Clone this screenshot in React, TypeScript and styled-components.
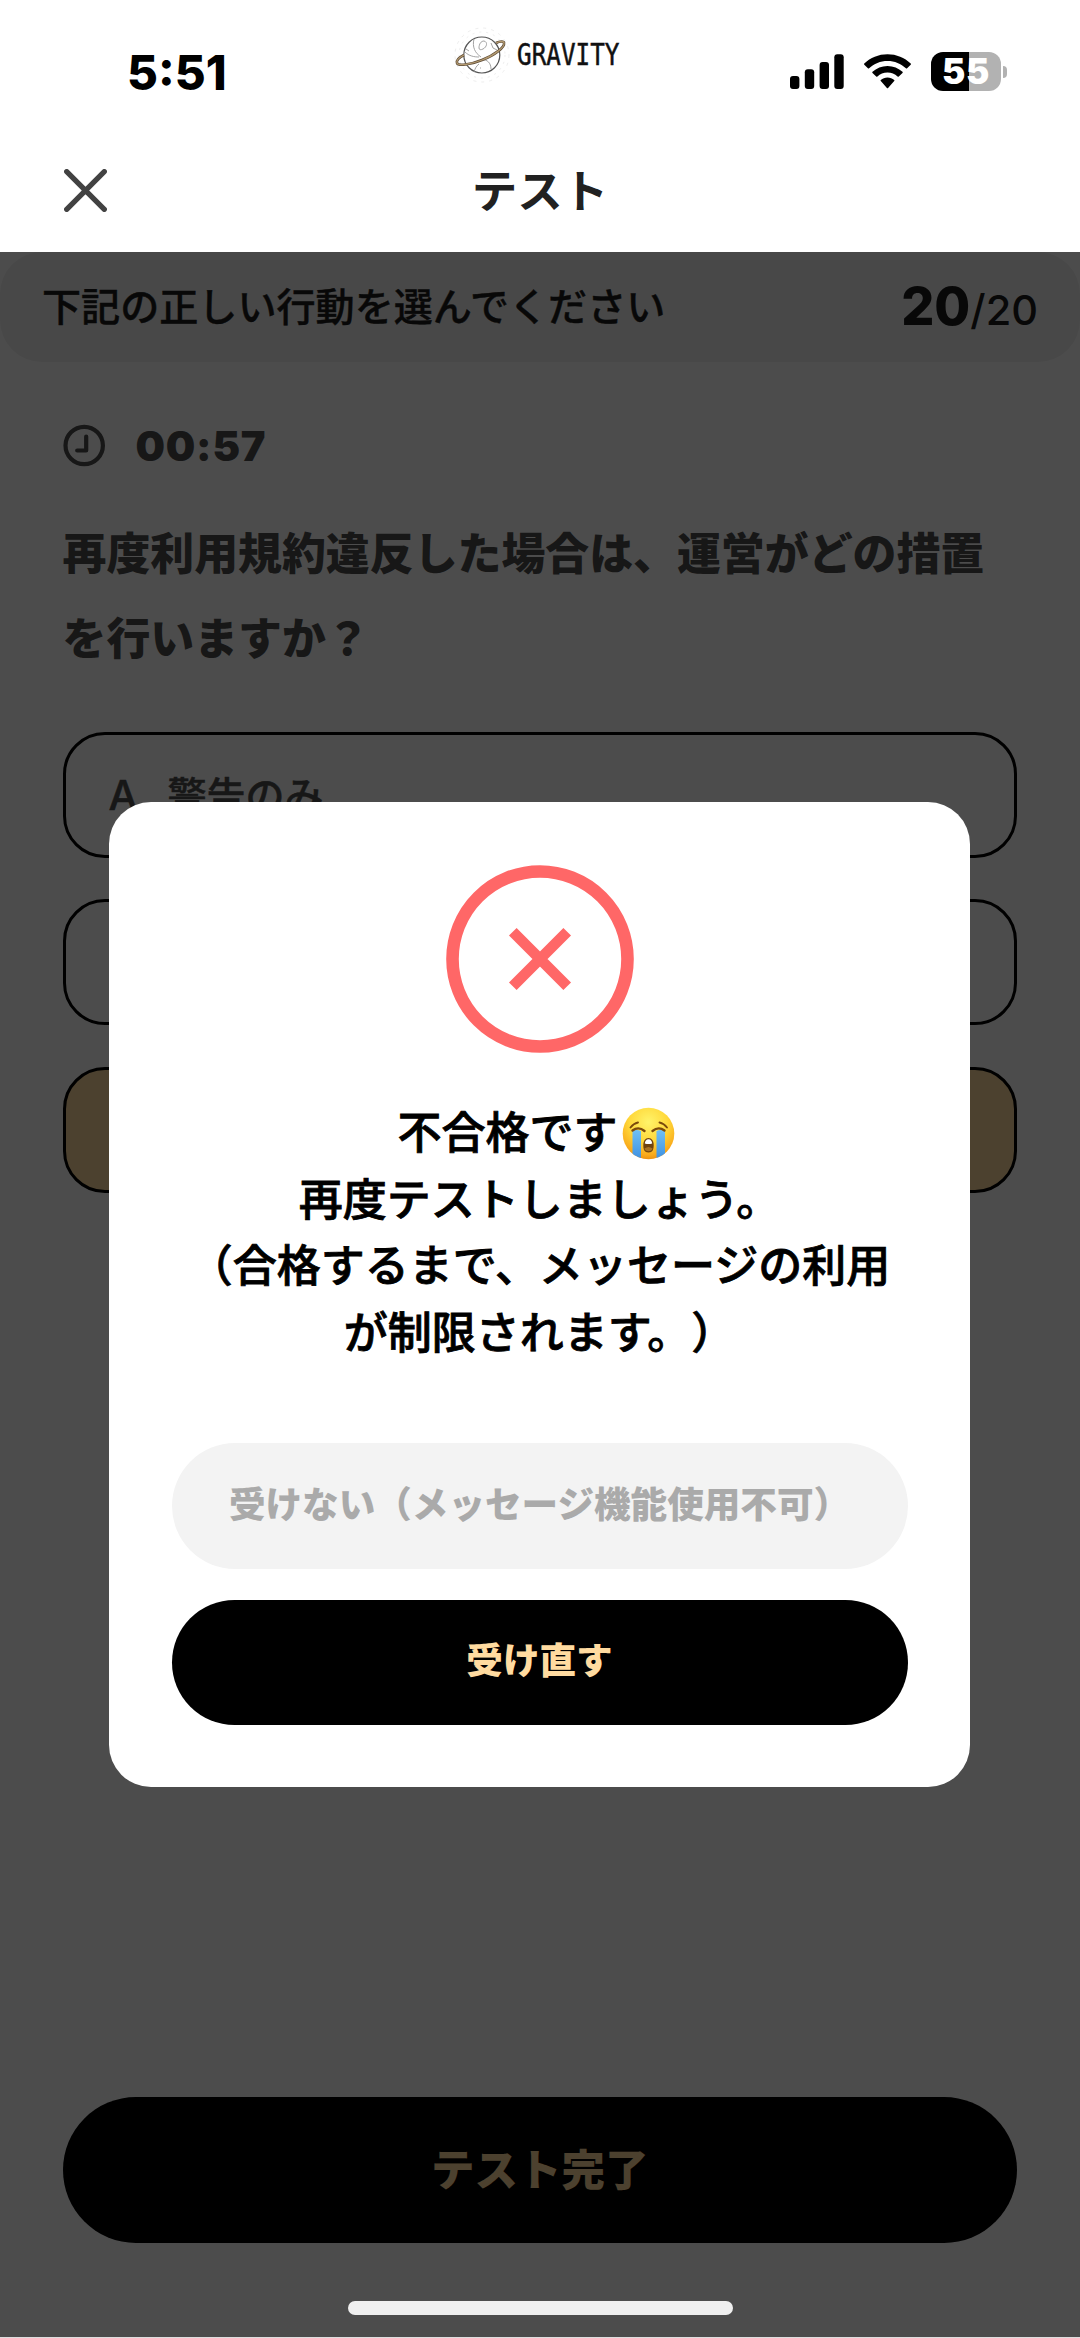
import React from 'react';
import styled, { createGlobalStyle } from 'styled-components';

const GlobalStyle = createGlobalStyle`
  * { box-sizing: border-box; }
  body {
    margin: 0;
    background: #fff;
    font-family: Inter, "Noto Sans CJK JP", sans-serif;
    text-spacing-trim: space-all;
    -webkit-font-smoothing: antialiased;
  }
  button { font-family: inherit; border: 0; padding: 0; margin: 0; }
  p, h1, h2 { margin: 0; }
  svg { display: block; }
`;

const Screen = styled.div`
  width: 1080px;
  height: 2338px;
  display: flex;
  flex-direction: column;
  overflow: hidden;
  background: #fff;
`;

const StatusBar = styled.header`
  display: grid;
  grid-template-columns: 450px 170px 1fr;
  height: 136px;
  flex: none;
`;

const Clock = styled.time`
  padding: 44px 0 0 127px;
  font-size: 47.5px;
  line-height: 58px;
  font-weight: 800;
  letter-spacing: 0;
  color: #000;
`;

const Brand = styled.div`
  display: flex;
  width: 170px;
  height: 60px;
  margin-top: 25px;
  align-items: center;
`;

const BrandName = styled.span`
  width: 102px;
  margin-left: 5px;
  font-family: "DejaVu Sans Mono", monospace;
  font-size: 30px;
  line-height: 60px;
  color: #111;
  white-space: nowrap;
  -webkit-text-stroke: 0.5px #111;
  transform: scaleX(0.81);
  transform-origin: left center;
`;

const StatusIcons = styled.div`
  display: flex;
  justify-content: flex-end;
  padding: 52px 73px 0 0;
`;

const Signal = styled.svg`
  margin: 2px 20px 0 0;
`;

const Wifi = styled.svg`
  margin: 2px 20px 0 0;
`;

const Battery = styled.div`
  display: flex;
  align-items: center;
  height: 39px;
  gap: 2px;
`;

const BatteryBody = styled.div<{ $level: number }>`
  width: 70px;
  height: 39px;
  border-radius: 12px;
  background: linear-gradient(
    to right,
    #000 ${(p) => p.$level}%,
    #b2b2b2 ${(p) => p.$level}%
  );
  color: #fff;
  font-size: 35px;
  line-height: 39px;
  font-weight: 900;
  letter-spacing: 0.6px;
  text-align: center;
`;

const BatteryTip = styled.span`
  width: 4px;
  height: 12px;
  border-radius: 0 6px 6px 0;
  background: #b2b2b2;
`;

const NavBar = styled.nav`
  display: grid;
  grid-template-columns: 1fr auto 1fr;
  align-items: center;
  height: 116px;
  padding: 0 64px 7px;
  flex: none;
`;

const CloseButton = styled.button`
  width: 43px;
  height: 43px;
  background: none;
`;

const Title = styled.h1`
  padding-top: 2px;
  font-size: 45.5px;
  line-height: 60px;
  font-weight: 700;
  color: #212121;
`;

const Body = styled.main`
  position: relative;
  display: flex;
  flex-direction: column;
  flex: 1;
`;

const Banner = styled.section`
  display: flex;
  align-items: center;
  justify-content: space-between;
  height: 110px;
  padding: 0 42px 0 42px;
  border-radius: 42px;
  background: #f1f1f1;
  color: #1b1b1b;
  font-size: 39.1px;
  line-height: 56px;
  font-weight: 500;
`;

const BannerText = styled.span`
  padding-bottom: 1px;
  -webkit-text-stroke: 0.4px #1b1b1b;
`;

const Counter = styled.div`
  display: flex;
  align-items: baseline;
  padding-top: 3px;
  font-size: 41.5px;
  line-height: 60px;
  font-weight: 450;
`;

const Current = styled.strong`
  font-size: 52px;
  font-weight: 850;
`;

const Quiz = styled.section`
  display: flex;
  flex-direction: column;
  padding: 62px 63px 0 62.5px;
`;

const Timer = styled.div`
  display: flex;
  align-items: center;
  gap: 29px;
  height: 44px;
  color: #4d4d4d;
  font-size: 41.5px;
  font-weight: 900;
  letter-spacing: 0.8px;
`;

const Question = styled.h2`
  margin-top: 43.5px;
  color: #4d4d4d;
  font-size: 43.9px;
  line-height: 85.5px;
  font-weight: 900;
`;

const Options = styled.div`
  display: flex;
  flex-direction: column;
  gap: 41.5px;
  margin-top: 49px;
`;

const Option = styled.div<{ $selected?: boolean }>`
  display: flex;
  align-items: center;
  gap: 8px;
  height: 126px;
  padding: 0 0 3px 43px;
  border: 3px solid #000;
  border-radius: 42px;
  background: ${(p) => (p.$selected ? '#fdd99d' : '#fff')};
  color: #4d4d4d;
  font-size: 39px;
  font-weight: 450;
  -webkit-text-stroke: 0.5px #4d4d4d;
`;

const Letter = styled.span`
  width: 51px;
  padding-top: 3px;
  font-size: 41px;
`;

const SubmitButton = styled.button`
  height: 146px;
  margin: auto 63px 95px 62.5px;
  padding-bottom: 5px;
  border-radius: 73px;
  background: #000;
  color: #fdd99d;
  font-size: 43.5px;
  font-weight: 900;
`;

const Overlay = styled.div`
  position: absolute;
  inset: 0;
  display: flex;
  flex-direction: column;
  align-items: center;
  padding: 550px 1px 0 0;
  background: rgba(0, 0, 0, 0.7);
  border-bottom: 1px solid #ddd;
`;

const Dialog = styled.section`
  display: flex;
  flex-direction: column;
  align-items: center;
  width: 861px;
  height: 985px;
  padding: 63px 63px 0;
  border-radius: 42px;
  background: #fff;
`;

const Message = styled.p`
  margin-top: 47px;
  color: #000;
  font-size: 44px;
  line-height: 66.5px;
  font-weight: 500;
  text-align: center;
  white-space: nowrap;
  -webkit-text-stroke: 0.8px #000;
`;

const MessageLine = styled.span`
  display: flex;
  justify-content: center;
  align-items: center;
  height: 66.5px;
`;

const Emoji = styled.svg`
  margin: 0 6px 0 5px;
`;

const DialogActions = styled.div`
  display: flex;
  flex-direction: column;
  gap: 31px;
  width: 736px;
  margin-top: 76.5px;
`;

const DialogButton = styled.button<{ $primary?: boolean }>`
  height: ${(p) => (p.$primary ? '125px' : '126px')};
  padding-bottom: 2px;
  border-radius: 63px;
  background: ${(p) => (p.$primary ? '#000' : '#f3f3f3')};
  color: ${(p) => (p.$primary ? '#ffdba0' : '#aaa')};
  font-size: 36.6px;
  line-height: 54px;
  font-weight: 900;
  white-space: nowrap;
`;

const HomeIndicator = styled.div`
  width: 385px;
  height: 14px;
  margin: auto 0 22px 1px;
  border-radius: 7px;
  background: #efefef;
`;

const PlanetLogo = () => (
  <svg width="62" height="60" viewBox="450 25 62 60" fill="none">
    <circle cx="482" cy="55" r="27" stroke="#eee" strokeWidth="1" strokeDasharray="3 5" />
    <circle cx="482" cy="55" r="23" stroke="#eee" strokeWidth="1" strokeDasharray="2 5" />
    <circle cx="481.8" cy="55" r="18" fill="#fff" stroke="#555" strokeWidth="1.2" />
    <g stroke="#999" strokeWidth="0.9">
      <path d="M474 39c-2 8 1 14 7 18M465 52c4 4 9 5 14 5M479 64c-3 2-4 5-5 8M482 60c5-1 9 3 9 9M479 48c0-4 2-7 5-7 4 1 3 6-1 8-2 1-4 1-4-1zM491 43l2 5 4 2M466 49l3 2M480 68h1" />
    </g>
    <path
      d="M496 43c4-2 8-2 8 0 1 4-9 12-22 17-12 5-24 6-25 3-1-3 3-6 7-8"
      stroke="#5c4a36"
      strokeWidth="2.6"
    />
    <path
      d="M496 43c4-2 8-2 8 0 1 4-9 12-22 17-12 5-24 6-25 3-1-3 3-6 7-8"
      stroke="#b39a70"
      strokeWidth="1.3"
    />
  </svg>
);

const SignalIcon = () => (
  <Signal width="54" height="35" viewBox="0 0 54 35">
    <rect x="0" y="22" width="9.4" height="13" rx="3" />
    <rect x="14.8" y="15.2" width="9.4" height="19.8" rx="3" />
    <rect x="29.6" y="8" width="9.4" height="27" rx="3" />
    <rect x="44.3" y="0.3" width="9.4" height="34.7" rx="3" />
  </Signal>
);

const WifiIcon = () => (
  <Wifi width="47" height="35" viewBox="0 0 47 35">
    <path d="M23.5 0.3C32.5 0.3 40.6 3.7 46.7 9.5q.6.6 0 1.2l-3.6 3.5q-.6.6-1.2 0C37 9.6 30.6 6.9 23.5 6.9S10 9.6 5.1 14.2q-.6.6-1.2 0L.3 10.7q-.6-.6 0-1.2C6.4 3.7 14.5.3 23.5.3z" />
    <path d="M23.5 11.9c5.8 0 11 2.2 15 5.8q.6.6 0 1.2l-3.7 3.6q-.6.5-1.2 0c-2.7-2.4-6.2-3.9-10.1-3.9s-7.4 1.5-10.1 3.9q-.6.5-1.2 0l-3.7-3.6q-.6-.6 0-1.2c4-3.6 9.2-5.8 15-5.8z" />
    <path d="M23.5 23.5c2.6 0 4.9.9 6.7 2.4q.6.6 0 1.2l-6.1 6.9q-.6.6-1.2 0l-6.1-6.9q-.6-.6 0-1.2c1.8-1.5 4.1-2.4 6.7-2.4z" />
  </Wifi>
);

const CloseIcon = () => (
  <svg width="43" height="43" viewBox="0 0 43 43">
    <path d="M2.7 2.7l37.6 37.6M40.3 2.7L2.7 40.3" stroke="#424242" strokeWidth="5.3" strokeLinecap="round" />
  </svg>
);

const TimerIcon = () => (
  <svg width="44" height="44" viewBox="0 0 44 44" fill="none" stroke="#4d4d4d" strokeWidth="4.2" strokeLinecap="round" strokeLinejoin="round">
    <circle cx="21.2" cy="21.5" r="18.7" />
    <path d="M23.2 12.5v14h-9" />
  </svg>
);

const FailIcon = () => (
  <svg width="188" height="188" viewBox="0 0 188 188" fill="none" stroke="#ff6767">
    <circle cx="94" cy="94" r="87.5" strokeWidth="12.6" />
    <path d="M66.8 66.8l54.4 54.4M121.2 66.8l-54.4 54.4" strokeWidth="10.8" />
  </svg>
);

const CryingFace = () => (
  <Emoji width="53" height="53" viewBox="0 0 53 53" role="img" aria-label="😭">
    <defs>
      <radialGradient id="face" cx="0.5" cy="0.28" r="0.75">
        <stop offset="0" stopColor="#fff46a" />
        <stop offset="0.5" stopColor="#ffd83a" />
        <stop offset="0.85" stopColor="#f9a91b" />
        <stop offset="1" stopColor="#e88a10" />
      </radialGradient>
      <linearGradient id="tear" x1="0" y1="0" x2="0" y2="1">
        <stop offset="0" stopColor="#6fc0f5" />
        <stop offset="1" stopColor="#3d8fe0" />
      </linearGradient>
      <clipPath id="faceEdge"><circle cx="26.5" cy="26.5" r="25.8" /></clipPath>
    </defs>
    <circle cx="26.5" cy="26.5" r="25.8" fill="url(#face)" />
    <g clipPath="url(#faceEdge)" fill="url(#tear)">
      <path d="M10.5 24q4-2 8.5 0v29h-8.5zM34.5 24q4-2 8.5 0v29h-8.5z" />
    </g>
    <g fill="none" stroke="#7b4a0c" strokeLinecap="round">
      <path d="M8.5 20.500q3-4 7.500-5M37.500 15.500q4.500 1 7.500 5" strokeWidth="1.9" />
      <path d="M10.500 23.500q6-4.500 12 .5M30.500 24q6-5 12-.5" strokeWidth="2.4" />
    </g>
    <path d="M21.300 38c0-4 2-7 5.200-7s5.200 3 5.200 7c0 4.500-1 7.500-5.200 7.500s-5.200-3-5.200-7.500z" fill="#70430f" />
    <path d="M22.800 36.500c.3-2.500 1.500-4.200 3.700-4.200s3.400 1.700 3.700 4.200q-3.700 1.200-7.400 0z" fill="#fff" />
    <path d="M22.500 41.500q4-3 8 0-.7 2.800-4 2.800t-4-2.800z" fill="#a97324" />
  </Emoji>
);

export default function App() {
  return (
    <>
      <GlobalStyle />
      <Screen>
        <StatusBar>
          <Clock>5:51</Clock>
          <Brand>
            <PlanetLogo />
            <BrandName>GRAVITY</BrandName>
          </Brand>
          <StatusIcons>
            <SignalIcon />
            <WifiIcon />
            <Battery>
              <BatteryBody $level={55}>55</BatteryBody>
              <BatteryTip />
            </Battery>
          </StatusIcons>
        </StatusBar>
        <NavBar>
          <CloseButton aria-label="閉じる">
            <CloseIcon />
          </CloseButton>
          <Title>テスト</Title>
        </NavBar>
        <Body>
          <Banner>
            <BannerText>下記の正しい行動を選んでください</BannerText>
            <Counter>
              <Current>20</Current>/20
            </Counter>
          </Banner>
          <Quiz>
            <Timer>
              <TimerIcon />
              <span>00:57</span>
            </Timer>
            <Question>
              再度利用規約違反した場合は、運営がどの措置
              <br />
              を行いますか？
            </Question>
            <Options>
              <Option>
                <Letter>A.</Letter>
                <span>警告のみ</span>
              </Option>
              <Option />
              <Option $selected />
            </Options>
          </Quiz>
          <SubmitButton>テスト完了</SubmitButton>
          <Overlay>
            <Dialog role="dialog">
              <FailIcon />
              <Message>
                <MessageLine>
                  不合格です
                  <CryingFace />
                </MessageLine>
                <MessageLine>再度テストしましょう。</MessageLine>
                <MessageLine>（合格するまで、メッセージの利用</MessageLine>
                <MessageLine>が制限されます。）</MessageLine>
              </Message>
              <DialogActions>
                <DialogButton>受けない（メッセージ機能使用不可）</DialogButton>
                <DialogButton $primary>受け直す</DialogButton>
              </DialogActions>
            </Dialog>
            <HomeIndicator />
          </Overlay>
        </Body>
      </Screen>
    </>
  );
}
